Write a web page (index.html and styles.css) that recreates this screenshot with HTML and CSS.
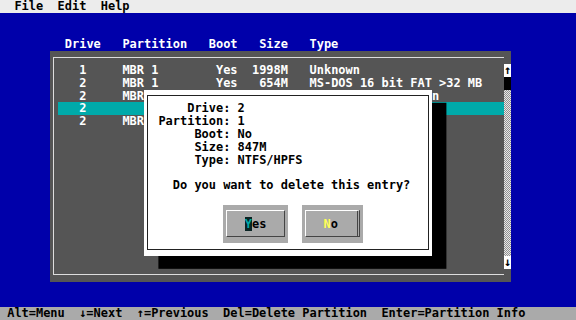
FILE: index.html
```
<!DOCTYPE html>
<html lang="en">

<head>
  <meta charset="UTF-8">
  <meta name="viewport" content="width=device-width, initial-scale=1.0">
  <title>Delete Partition</title>
  <link rel="stylesheet" href="styles.css">
</head>

<body>
  <div class="screen">
    <div class="menubar">
      <span>File</span>
      <span>Edit</span>
      <span>Help</span>
    </div>

    <main class="desk">
      <div class="colhead">
        <span>Drive</span>
        <span>Partition</span>
        <span>Boot</span>
        <span>Size</span>
        <span>Type</span>
      </div>

      <div class="panel">
        <div class="frame">
          <div class="row">
            <span class="drive">1</span><span class="part">MBR 1</span><span class="boot">Yes</span><span class="size">1998M</span><span class="type">Unknown</span>
          </div>
          <div class="row">
            <span class="drive">2</span><span class="part">MBR 1</span><span class="boot">Yes</span><span class="size">654M</span><span class="type">MS-DOS 16 bit FAT &gt;32 MB</span>
          </div>
          <div class="row">
            <span class="drive">2</span><span class="part">MBR 2</span><span class="boot">No</span><span class="size">1192M</span><span class="type">Extended partition</span>
          </div>
          <!-- details of this row are shown in the dialog -->
          <div class="row selected">
            <span class="drive">2</span>
          </div>
          <div class="row">
            <span class="drive">2</span><span class="part">MBR 3</span>
          </div>
        </div>
        <div class="scroll">
          <div class="arrow">↑</div>
          <div class="thumb"></div>
          <div class="track"></div>
          <div class="arrow">↓</div>
        </div>
      </div>
    </main>

    <div class="status">
      <span>Alt=Menu</span>
      <span>↓=Next</span>
      <span>↑=Previous</span>
      <span>Del=Delete Partition</span>
      <span>Enter=Partition Info</span>
    </div>

    <!-- confirm box over the list -->
    <div class="dialog">
      <dl class="info">
        <dt>Drive:</dt><dd>2</dd>
        <dt>Partition:</dt><dd>1</dd>
        <dt>Boot:</dt><dd>No</dd>
        <dt>Size:</dt><dd>847M</dd>
        <dt>Type:</dt><dd>NTFS/HPFS</dd>
      </dl>
      <p class="question">Do you want to delete this entry?</p>
      <div class="buttons">
        <button class="btn"><span class="face"><span class="hot-y">Y</span>es</span></button>
        <button class="btn btn-no"><span class="face"><span class="hot-n">N</span>o</span></button>
      </div>
    </div>
  </div>
</body>

</html>
```

FILE: styles.css
```
:root {
  --cw: 7.2px;   /* one text cell wide */
  --rh: 12.8px;  /* one text row high */
}

body {
  margin: 0;
  padding: 0;
}

.screen {
  position: relative;
  width: 576px;
  height: 320px;
  display: flex;
  flex-direction: column;
  overflow: hidden;
  background-color: #0000aa;
  color: #fff;
  font-family: "DejaVu Sans Mono", monospace;
  font-weight: bold;
  font-size: 11.96px; /* 7.2px advance */
  line-height: var(--rh);
}

.menubar {
  height: var(--rh);
  display: flex;
  gap: calc(var(--cw) * 2);
  padding-left: calc(var(--cw) * 2);
  background-color: #ececec;
  color: #000;
}

.desk {
  flex: 1;
  padding-top: calc(var(--rh) * 2);
}

.colhead {
  height: var(--rh);
  display: flex;
  gap: calc(var(--cw) * 3);
  padding-left: calc(var(--cw) * 9);
}

.panel {
  display: flex;
  width: calc(var(--cw) * 64);
  height: calc(var(--rh) * 18);
  margin-left: calc(var(--cw) * 7);
  background-color: #555;
}

.frame {
  flex: 1;
  margin: 6px 0 7px 3px;
  padding: 5.8px 0 0 3.2px;
  border: 1px solid #ddd;
  border-right: none;
}

.row {
  display: grid;
  grid-template-columns: calc(var(--cw) * 4) calc(var(--cw) * 18) calc(var(--cw) * 3) calc(var(--cw) * 7) 1fr;
  height: var(--rh);
  white-space: pre;
}

.row.selected {
  background-color: #00aaaa;
}

.drive,
.size {
  text-align: right;
}

.part {
  padding-left: calc(var(--cw) * 5);
}

.type {
  padding-left: calc(var(--cw) * 3);
}

.scroll {
  display: flex;
  flex-direction: column;
  width: var(--cw);
  margin: var(--rh) 0;
}

.arrow {
  height: var(--rh);
  background-color: #fff;
  color: #000;
  text-align: center;
}

.thumb {
  height: var(--rh);
  background-color: #000;
}

.track {
  flex: 1;
  background: repeating-conic-gradient(#e8e8e8 0 25%, #909090 0 50%) 0 0 / 2px 2px;
}

.status {
  height: var(--rh);
  display: flex;
  gap: calc(var(--cw) * 2);
  padding-left: var(--cw);
  background-color: #aaa;
  color: #000;
}

.dialog {
  position: absolute;
  left: calc(var(--cw) * 20);
  top: calc(var(--rh) * 7);
  width: calc(var(--cw) * 40);
  height: calc(var(--rh) * 13);
  padding-top: var(--rh);
  box-sizing: border-box;
  background-color: #fff;
  color: #000;
  box-shadow: calc(var(--cw) * 2) var(--rh) 0 #000;
}

.dialog::before {
  content: "";
  position: absolute;
  inset: 5px 3px 6px 3px;
  border: 1px solid #222;
}

.info {
  display: grid;
  grid-template-columns: calc(var(--cw) * 12) 1fr;
  column-gap: var(--cw);
  margin: 0;
}

.info dt {
  text-align: right;
}

.info dd {
  margin: 0;
}

.question {
  margin: var(--rh) 0 0;
  padding-left: calc(var(--cw) * 4);
}

.buttons {
  display: flex;
  gap: 14px;
  margin-top: var(--rh);
  padding-left: calc(var(--cw) * 11);
}

.btn {
  width: calc(var(--cw) * 9);
  height: calc(var(--rh) * 3);
  padding: 5.5px 3px 6.5px;
  border: none;
  background-color: #aaa;
  font: inherit;
  color: #000;
  text-align: left;
}

.btn-no {
  width: 61px;
}

.face {
  display: block;
  height: 100%;
  box-sizing: border-box;
  padding: 6.3px 0 0 17.6px;
  border-top: 1px solid #fff;
  border-left: 1px solid #fff;
  border-right: 1px solid #444;
  border-bottom: 1px solid #444;
}

.btn-no .face {
  border-right: 3px double #444;
}

.hot-y {
  background-color: #0a2424;
  color: #00aaaa;
}

.hot-n {
  color: #ffff55;
}
```
